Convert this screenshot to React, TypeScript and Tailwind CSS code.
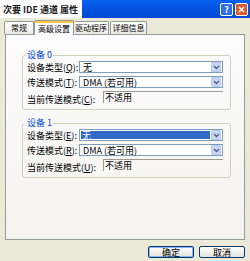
const FONT = "font-['Noto_Sans_CJK_SC','Noto_Sans',sans-serif]";

function Combo({ value, selected }: { value: string; selected?: boolean }) {
  return (
    <div className="flex h-[12px] w-[144px] items-center border border-[#7F9DB9] bg-white">
      <div className="flex h-full flex-1 items-center p-[1px]">
        <span
          className={
            selected
              ? "flex h-full w-full items-center bg-[#316AC5] pl-[1px] text-[9px] leading-none text-white"
              : "pl-[2px] text-[9px] leading-none text-black"
          }
        >
          {value}
        </span>
      </div>
      <div className="mr-[1px] flex h-[10px] w-[10px] items-center justify-center rounded-[1px] border border-[#B9CBF3] bg-[#C7D6F7]">
        <svg width="7" height="5" viewBox="0 0 7 5">
          <path d="M1 1 L3.5 3.5 L6 1" stroke="#4D6185" strokeWidth="1.4" fill="none" />
        </svg>
      </div>
    </div>
  );
}

function Device({ n, keys }: { n: string; keys: [string, string, string] }) {
  return (
    <div className="relative ml-[16px] mr-[13px] h-[55px] rounded-[3px] border border-[#D0D0BF]">
      <span className="absolute -top-[6px] left-[3px] bg-[#FBFBF9] px-[1px] text-[9px] leading-none text-[#0046D5]">
        设备 {n}
      </span>
      <div className="flex flex-col gap-[3px] pl-[4px] pr-[7px] pt-[5px]">
        <div className="flex items-center justify-between">
          <span className="text-[9px] leading-none text-black">
            设备类型(<u>{keys[0]}</u>):
          </span>
          <Combo value="无" selected={n === "1"} />
        </div>
        <div className="flex items-center justify-between">
          <span className="text-[9px] leading-none text-black">
            传送模式(<u>{keys[1]}</u>):
          </span>
          <Combo value="DMA (若可用)" />
        </div>
        <div className="flex items-start">
          <span className="mt-[4px] w-[76px] whitespace-nowrap text-[9px] leading-none text-black">
            当前传送模式(<u>{keys[2]}</u>):
          </span>
          <div className="flex h-[12px] w-[120px] items-center border-t border-l border-[#9C9A8F] pl-[1px] text-[9px] leading-none text-black">
            不适用
          </div>
        </div>
      </div>
    </div>
  );
}

const TAB = "flex h-[13px] items-center justify-center whitespace-nowrap rounded-t-[2px] border border-b-0 border-[#919B9C] bg-gradient-to-b from-white to-[#ECEBE6] text-[8px] leading-none text-black";

export default function App() {
  return (
    <div className={`${FONT} flex h-[261px] w-[250px] flex-col overflow-hidden bg-[#ECE9D8]`}>
      {/* title bar */}
      <div className="flex h-[18px] items-center bg-gradient-to-b from-[#0A61F0] via-[#0453E0] to-[#0049D4]">
        <div className="flex h-full w-[82px] items-center bg-white pl-[3px]">
          <span className="whitespace-nowrap text-[9px] font-bold leading-none text-[#1A1A1A]">
            次要 IDE 通道 属性
          </span>
        </div>
        <div className="ml-auto mr-[2px] flex gap-[2px]">
          <div className="flex h-[13px] w-[13px] items-center justify-center rounded-[2px] border border-white bg-[#2F6FE8] text-[9px] font-bold leading-none text-white">
            ?
          </div>
          <div className="flex h-[13px] w-[13px] items-center justify-center rounded-[2px] border border-white bg-[#DE5A2E]">
            <svg width="7" height="7" viewBox="0 0 7 7">
              <path d="M1 1 L6 6 M6 1 L1 6" stroke="white" strokeWidth="1.6" />
            </svg>
          </div>
        </div>
      </div>

      {/* tabs */}
      <div className="mt-[2px] flex items-end pl-[4px]">
        <div className={`${TAB} w-[30px]`}>常规</div>
        <div className="relative z-10 -mb-[1px] flex h-[15px] w-[40px] flex-col rounded-t-[2px] border border-b-0 border-[#919B9C] bg-[#FCFCFE]">
          <div className="h-[2px] bg-[#FFC83C]" />
          <div className="flex flex-1 items-center justify-center whitespace-nowrap text-[8px] leading-none text-black">
            高级设置
          </div>
        </div>
        <div className={`${TAB} w-[35px] border-l-0`}>驱动程序</div>
        <div className={`${TAB} ml-[1px] w-[37px]`}>详细信息</div>
      </div>

      {/* panel */}
      <div className="mx-[5px] flex h-[206px] flex-col gap-[13px] border border-[#919B9C] bg-gradient-to-b from-[#FCFCFE] to-[#F4F3EE] pt-[20px]">
        <Device n="0" keys={["Q", "T", "C"]} />
        <Device n="1" keys={["E", "R", "U"]} />
      </div>

      {/* buttons */}
      <div className="mt-[6px] flex justify-end gap-[5px] pr-[5px]">
        <div className="flex h-[12px] w-[46px] items-center justify-center rounded-[2px] border border-[#003C74] bg-gradient-to-b from-white to-[#E3E2DA] text-[9px] leading-none text-black shadow-[inset_0_0_0_1px_#8CB4F2]">
          确定
        </div>
        <div className="flex h-[12px] w-[46px] items-center justify-center rounded-[2px] border border-[#003C74] bg-gradient-to-b from-white to-[#E3E2DA] text-[9px] leading-none text-black">
          取消
        </div>
      </div>
    </div>
  );
}
